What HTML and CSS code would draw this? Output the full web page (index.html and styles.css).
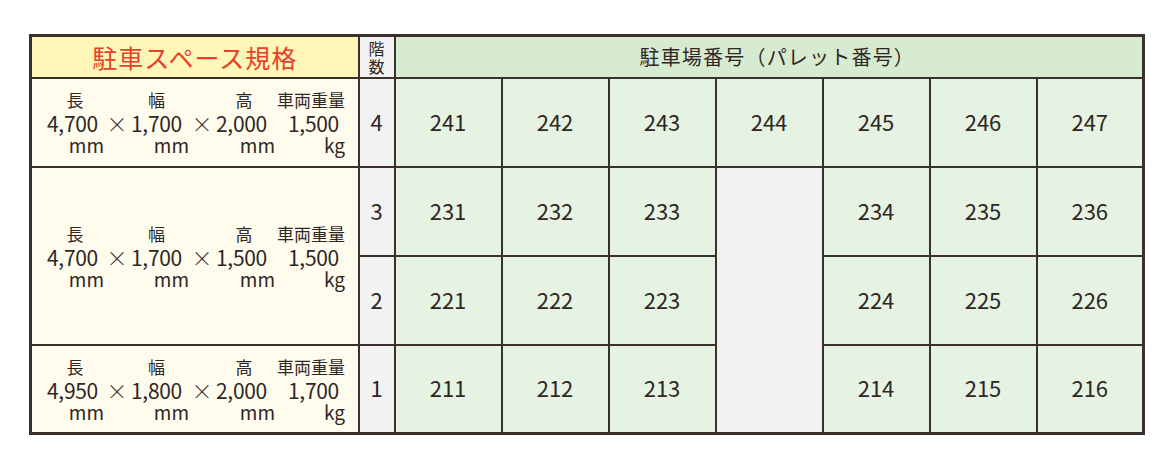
FILE: index.html
```html
<!DOCTYPE html>
<html lang="ja">
<head>
<meta charset="utf-8">
<link rel="stylesheet" href="styles.css">
</head>
<body>
<table class="park">
  <colgroup>
    <col class="c-spec"><col class="c-floor">
    <col class="c-slot"><col class="c-slot"><col class="c-slot"><col class="c-slot"><col class="c-slot"><col class="c-slot"><col class="c-slot">
  </colgroup>
  <thead>
    <tr class="head">
      <th class="h-spec">駐車スペース規格</th>
      <th class="h-floor">階<br>数</th>
      <th class="h-slots" colspan="7">駐車場番号（パレット番号）</th>
    </tr>
  </thead>
  <tbody>
    <tr>
      <td class="spec">
        <div class="specgrid">
          <span class="lbl l1">長</span><span></span><span class="lbl l2">幅</span><span></span><span class="lbl l3">高</span><span class="lbl l4">車両重量</span>
          <span class="val">4,700</span><span class="x">×</span><span class="val">1,700</span><span class="x">×</span><span class="val">2,000</span><span class="val v4">1,500</span>
          <span class="unit">mm</span><span></span><span class="unit">mm</span><span></span><span class="unit">mm</span><span class="unit">kg</span>
        </div>
      </td>
      <td class="floor">4</td>
      <td class="slot">241</td><td class="slot">242</td><td class="slot">243</td><td class="slot">244</td><td class="slot">245</td><td class="slot">246</td><td class="slot">247</td>
    </tr>
    <tr>
      <td class="spec" rowspan="2">
        <div class="specgrid">
          <span class="lbl l1">長</span><span></span><span class="lbl l2">幅</span><span></span><span class="lbl l3">高</span><span class="lbl l4">車両重量</span>
          <span class="val">4,700</span><span class="x">×</span><span class="val">1,700</span><span class="x">×</span><span class="val">1,500</span><span class="val v4">1,500</span>
          <span class="unit">mm</span><span></span><span class="unit">mm</span><span></span><span class="unit">mm</span><span class="unit">kg</span>
        </div>
      </td>
      <td class="floor">3</td>
      <td class="slot">231</td><td class="slot">232</td><td class="slot">233</td>
      <td class="void" rowspan="3"></td>
      <td class="slot">234</td><td class="slot">235</td><td class="slot">236</td>
    </tr>
    <tr>
      <td class="floor">2</td>
      <td class="slot">221</td><td class="slot">222</td><td class="slot">223</td>
      <td class="slot">224</td><td class="slot">225</td><td class="slot">226</td>
    </tr>
    <tr>
      <td class="spec">
        <div class="specgrid">
          <span class="lbl l1">長</span><span></span><span class="lbl l2">幅</span><span></span><span class="lbl l3">高</span><span class="lbl l4">車両重量</span>
          <span class="val">4,950</span><span class="x">×</span><span class="val">1,800</span><span class="x">×</span><span class="val">2,000</span><span class="val v4">1,700</span>
          <span class="unit">mm</span><span></span><span class="unit">mm</span><span></span><span class="unit">mm</span><span class="unit">kg</span>
        </div>
      </td>
      <td class="floor">1</td>
      <td class="slot">211</td><td class="slot">212</td><td class="slot">213</td>
      <td class="slot">214</td><td class="slot">215</td><td class="slot">216</td>
    </tr>
  </tbody>
</table>
</body>
</html>
```
FILE: styles.css
```css
html, body {
  margin: 0;
  padding: 0;
  background: #ffffff;
}
body {
  padding: 34px 0 0 29px;
  font-family: "Noto Sans CJK JP", "Noto Sans", sans-serif;
  color: #2f2725;
}
.park {
  border-collapse: collapse;
  table-layout: fixed;
  width: 1115px;
  border: 3px solid #3a302c;
}
.c-spec { width: 328px; }
.c-floor { width: 36px; }
.c-slot { width: 107px; }
.park th, .park td {
  border: 2px solid #3a302c;
  padding: 0;
  text-align: center;
  vertical-align: middle;
  font-weight: 400;
}
.head { height: 42px; }
.park tbody tr { height: 89px; }
.h-spec {
  background: #fff7b8;
  color: #e8402c;
  font-size: 25px;
  font-weight: 500;
  letter-spacing: 1px;
}
.h-floor {
  background: #f2f2f2;
  font-size: 16px;
  line-height: 18px;
}
.h-slots {
  background: #d7ebd0;
  font-size: 20px;
  letter-spacing: 1.2px;
  padding-left: 17px !important;
}
.spec {
  background: #fffcee;
}
.specgrid {
  display: grid;
  grid-template-columns: 58px 26px 59px 26px 60px 70px;
  margin-left: 15px;
  white-space: nowrap;
}
.lbl {
  font-size: 17px;
  line-height: 22px;
  text-align: center;
}
.l1 { padding-right: 2px; }
.l2 { padding-right: 8px; }
.l3 { padding-right: 4px; }
.l4 { text-align: right; padding-right: 1px; }
.val {
  font-size: 21px;
  line-height: 24px;
  text-align: left;
  letter-spacing: -0.3px;
}
.v4 { padding-left: 12px; }
.x {
  font-size: 21px;
  line-height: 24px;
  text-align: center;
  padding-right: 2px;
  font-weight: 300;
}
.unit {
  font-size: 19px;
  line-height: 20px;
  text-align: right;
  padding-right: 1px;
}
.floor {
  background: #f2f2f2;
  font-size: 22px;
  padding-bottom: 3px !important;
}
.slot {
  background: #e6f3e2;
  font-size: 22px;
  padding-bottom: 3px !important;
}
.void {
  background: #f2f2f2;
}
```
